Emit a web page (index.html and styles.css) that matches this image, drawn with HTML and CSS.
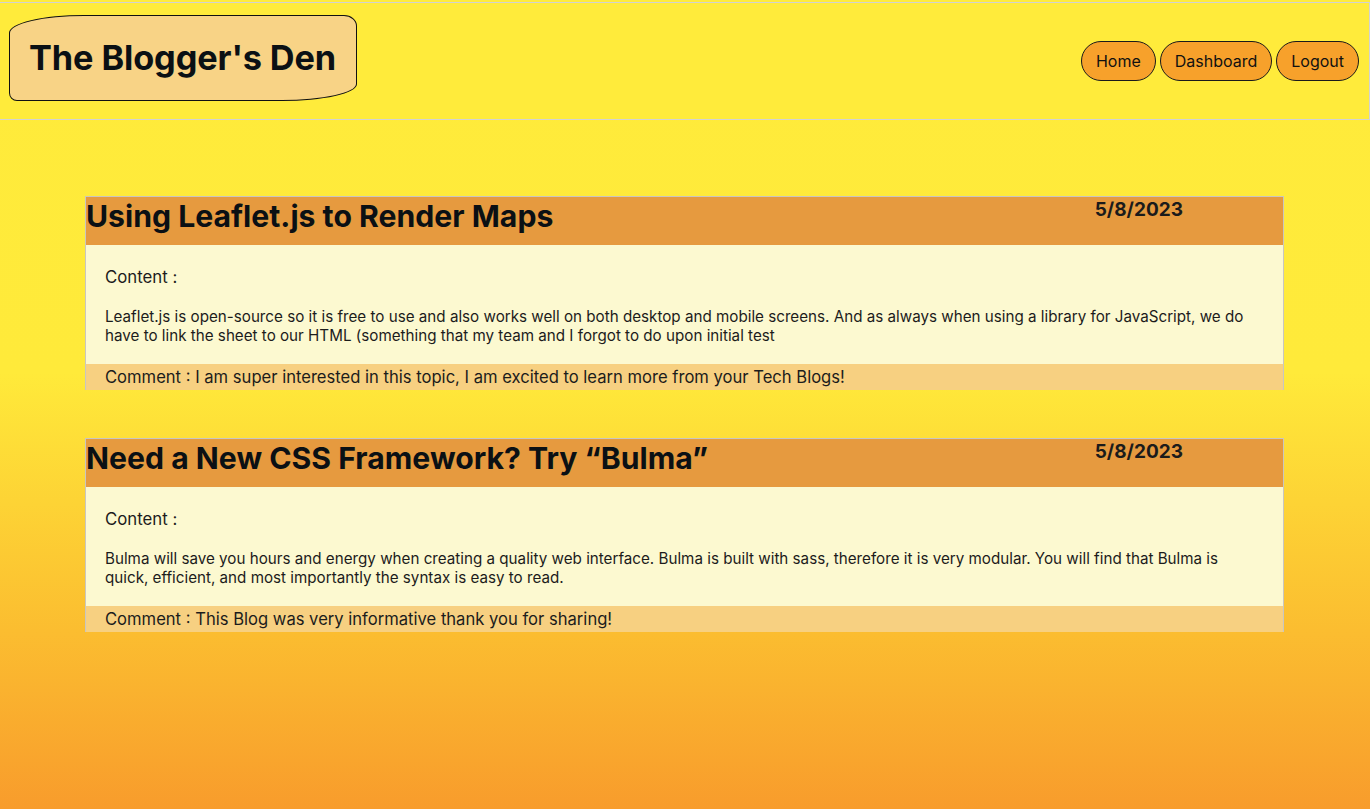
FILE: index.html
```html
<!DOCTYPE html>
<html lang="en">
<head>
<meta charset="utf-8">
<title>The Blogger's Den</title>
<link rel="stylesheet" href="styles.css">
</head>
<body>
<header class="site-header">
  <div class="logo"><h1 class="logo-text">The Blogger's Den</h1></div>
  <nav class="nav">
    <a class="nav-btn" href="#">Home</a>
    <a class="nav-btn" href="#">Dashboard</a>
    <a class="nav-btn" href="#">Logout</a>
  </nav>
</header>
<main class="posts">
  <article class="post">
    <div class="post-head">
      <h2 class="post-title">Using Leaflet.js to Render Maps</h2>
      <span class="post-date">5/8/2023</span>
    </div>
    <div class="post-body">
      <p class="post-label">Content :</p>
      <p class="post-text">Leaflet.js is open-source so it is free to use and also works well on both desktop and mobile screens. And as always when using a library for JavaScript, we do have to link the sheet to our HTML (something that my team and I forgot to do upon initial test</p>
    </div>
    <div class="post-comment">Comment : I am super interested in this topic, I am excited to learn more from your Tech Blogs!</div>
  </article>
  <article class="post">
    <div class="post-head">
      <h2 class="post-title">Need a New CSS Framework? Try “Bulma”</h2>
      <span class="post-date">5/8/2023</span>
    </div>
    <div class="post-body">
      <p class="post-label">Content :</p>
      <p class="post-text">Bulma will save you hours and energy when creating a quality web interface. Bulma is built with sass, therefore it is very modular. You will find that Bulma is quick, efficient, and most importantly the syntax is easy to read.</p>
    </div>
    <div class="post-comment">Comment : This Blog was very informative thank you for sharing!</div>
  </article>
</main>
</body>
</html>
```
FILE: styles.css
```css
* { box-sizing: border-box; }
html, body { height: 100%; }
body {
  margin: 0;
  padding-top: 2px;
  font-family: Inter, "Liberation Sans", sans-serif;
  color: #0b1014;
  background: linear-gradient(to bottom, #ffeb3b 0%, #ffea3a 46%, #fbbd30 78%, #f89c2c 100%);
  min-height: 809px;
}
.site-header {
  display: flex;
  justify-content: space-between;
  align-items: center;
  height: 118px;
  padding: 0 10px 0 9px;
  background: #ffeb3b;
  border-top: 1px solid #d2d2d2;
  border-right: 1px solid #d2d2d2;
  border-bottom: 1px solid #d2d2d2;
}
.logo {
  width: 348px;
  height: 86px;
  margin-bottom: 7px;
  display: flex;
  align-items: center;
  padding-left: 19px;
  background: #f8d386;
  border: 1px solid #111;
  border-radius: 75px 13px 75px 8px / 18px 11px 17px 8px;
}
.logo-text {
  margin: 0;
  font-size: 34.3px;
  font-weight: 700;
  color: #0b1014;
  letter-spacing: -0.1px;
}
.nav { display: flex; gap: 4px; }
.nav-btn {
  display: flex;
  align-items: center;
  height: 40px;
  padding: 0 14px;
  background: #f7a12b;
  border: 1px solid #1a1a1a;
  border-radius: 20px;
  color: #111;
  font-size: 16px;
  text-decoration: none;
}
.posts {
  display: flex;
  flex-direction: column;
  gap: 48px;
  width: 1199px;
  margin: 76px 0 0 85px;
}
.post {
  border: 1px solid #c9c6c0;
  border-bottom: none;
}
.post-head {
  display: flex;
  justify-content: space-between;
  align-items: flex-start;
  height: 48px;
  background: #e69a3f;
}
.post-title {
  margin: 1px 0 0;
  font-size: 30.2px;
  font-weight: 700;
  letter-spacing: 0;
  color: #0b1014;
}
.post-date {
  margin-right: 100px;
  margin-top: 1px;
  font-size: 19px;
  font-weight: 700;
  color: #1b1b1b;
}
.post-body {
  padding: 21px 19px 19px;
  background: #fcf9d0;
  color: #1c1c1c;
}
.post-label { margin: 0; font-size: 16.8px; line-height: 22px; }
.post-text { margin: 19px 0 0; font-size: 15.2px; line-height: 19px; }
.post-comment {
  height: 26px;
  padding-left: 19px;
  background: #f7d081;
  font-size: 16.6px;
  line-height: 26px;
  color: #1c1c1c;
}
```
